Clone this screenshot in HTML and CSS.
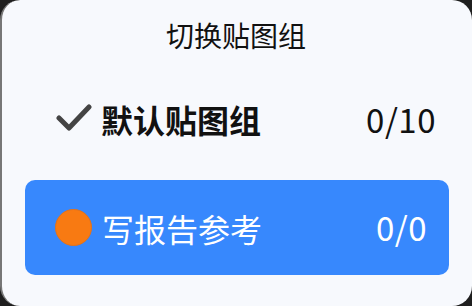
FILE: index.html
```html
<!DOCTYPE html>
<html lang="zh">
<head>
<meta charset="utf-8">
<link rel="stylesheet" href="styles.css">
</head>
<body>
<div class="panel">
  <div class="title">切换贴图组</div>
  <div class="row">
    <svg class="check" width="36" height="30" viewBox="0 0 36 30"><polyline points="3,14 13,24 33,3" fill="none" stroke="#444" stroke-width="5" stroke-linecap="round" stroke-linejoin="round"/></svg>
    <span class="name bold">默认贴图组</span>
    <span class="count">0/10</span>
  </div>
  <div class="row card">
    <span class="dot"></span>
    <span class="name">写报告参考</span>
    <span class="count">0/0</span>
  </div>
</div>
</body>
</html>
```

FILE: styles.css
```css
html, body {
  margin: 0;
  padding: 0;
  width: 472px;
  height: 306px;
  background: #1f1f1f;
  overflow: hidden;
}
.panel {
  box-sizing: border-box;
  width: 472px;
  height: 306px;
  background: #f7f9fd;
  border-radius: 20px;
  border-left: 2px solid #777;
  display: flex;
  flex-direction: column;
  font-family: "Noto Sans CJK SC", "Noto Sans", sans-serif;
  color: #111;
}
.title {
  height: 70px;
  display: flex;
  align-items: center;
  justify-content: center;
  font-size: 28px;
  line-height: 1;
  padding-right: 2px;
}
.row {
  height: 98px;
  margin: 0 23px 0 23px;
  padding: 0 13px 2px 32px;
  display: flex;
  align-items: center;
  font-size: 32px;
  line-height: 1;
}
.check {
  flex: none;
  margin-left: -1px;
}
.name {
  margin-left: 10px;
  flex: 1;
}
.bold {
  font-weight: bold;
  margin-left: 9px;
}
.count {
  font-size: 33px;
  letter-spacing: 0.5px;
}
.card {
  margin-top: 10px;
  height: 95px;
  background: #3788fd;
  border-radius: 10px;
  color: #fff;
  padding: 0 22px 0 30px;
}
.dot {
  flex: none;
  box-sizing: border-box;
  width: 37px;
  height: 37px;
  border-radius: 50%;
  background: #f87a12;
  border: 1px solid #e2721a;
}
```
